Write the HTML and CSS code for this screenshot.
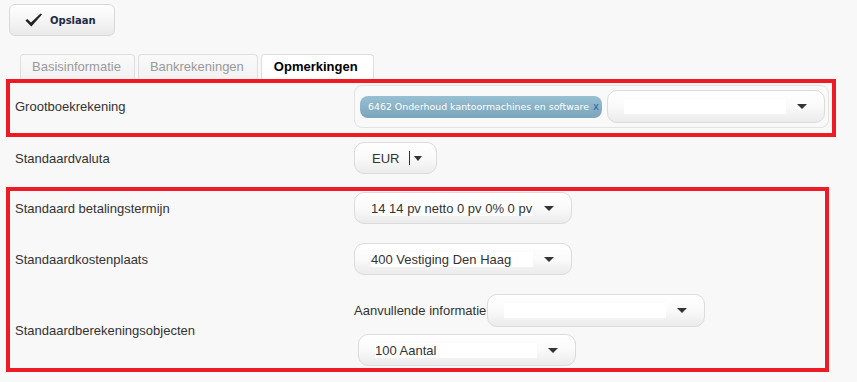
FILE: index.html
```html
<!DOCTYPE html>
<html lang="nl">
<head>
<meta charset="utf-8">
<title>Opmerkingen</title>
<link rel="stylesheet" href="styles.css">
</head>
<body>
<div class="page">
  <div class="toolbar">
    <button class="btn-save" type="button">
      <svg class="check" width="17" height="14" viewBox="0 0 17 14"><path d="M0.4 7.6 L2.3 5.9 L6 9.4 L15.6 0.4 L17 1.6 L6.4 13.6 Z" fill="#222"/></svg>
      <span>Opslaan</span>
    </button>
  </div>

  <div class="tabs">
    <div class="tab">Basisinformatie</div>
    <div class="tab">Bankrekeningen</div>
    <div class="tab active">Opmerkingen</div>
  </div>

  <div class="section hl hl-wide sec-gb">
    <div class="row">
      <div class="label">Grootboekrekening</div>
      <div class="multi">
        <span class="chip">6462 Onderhoud kantoormachines en software<span class="chip-x">x</span></span>
        <div class="select select-gb"><span class="value"></span><span class="arrow"></span></div>
      </div>
    </div>
  </div>

  <div class="section plain sec-val">
    <div class="row">
      <div class="label">Standaardvaluta</div>
      <div class="select select-eur"><span class="value-eur">EUR</span><span class="caret"></span><span class="arrow arrow-sm"></span></div>
    </div>
  </div>

  <div class="section hl hl-narrow sec-std">
    <div class="row">
      <div class="label">Standaard betalingstermijn</div>
      <div class="select"><span class="value">14 14 pv netto 0 pv 0% 0 pv</span><span class="arrow"></span></div>
    </div>
    <div class="row">
      <div class="label">Standaardkostenplaats</div>
      <div class="select"><span class="value">400 Vestiging Den Haag</span><span class="arrow"></span></div>
    </div>
    <div class="row">
      <div class="label">Standaardberekeningsobjecten</div>
      <div class="stack">
        <div class="inline">
          <span class="inline-label">Aanvullende informatie</span>
          <div class="select select-tall"><span class="value"></span><span class="arrow"></span></div>
        </div>
        <div class="select select-offset"><span class="value">100 Aantal</span><span class="arrow"></span></div>
      </div>
    </div>
  </div>
</div>
</body>
</html>
```

FILE: styles.css
```css
* { box-sizing: border-box; }

html, body {
  margin: 0;
  padding: 0;
  background: #f8f8f8;
}

body {
  font-family: "Liberation Sans", Arial, sans-serif;
  font-size: 13px;
  color: #333;
}

.page {
  padding: 4px 0 0 6px;
}

/* toolbar */
.toolbar {
  padding-left: 3px;
  display: flex;
}

.btn-save {
  display: flex;
  align-items: center;
  gap: 8px;
  width: 106px;
  height: 32px;
  margin: 0;
  padding: 0 0 0 15px;
  border: 1px solid #d9d9d9;
  border-radius: 6px;
  background: linear-gradient(#ffffff, #f4f4f4 55%, #e9e9e9);
  font-family: "DejaVu Sans", Verdana, sans-serif;
  font-weight: bold;
  font-size: 10px;
  color: #1d2b48;
  cursor: pointer;
}

.check { display: block; flex-shrink: 0; }

/* tabs */
.tabs {
  display: flex;
  gap: 3px;
  margin-top: 18px;
  padding-left: 14px;
}

.tab {
  height: 25px;
  line-height: 24px;
  padding: 0 13px 0 11px;
  border: 1px solid #dedede;
  border-bottom: none;
  border-radius: 4px 4px 0 0;
  background: linear-gradient(#fafafa, #f2f2f2);
  color: #9a9a9a;
  font-size: 13px;
}

.tab.active {
  padding: 0 15px 0 12px;
  background: #fff;
  color: #000;
  font-weight: bold;
}

/* sections */
.section {
  border: 4px solid transparent;
  display: flex;
  flex-direction: column;
}

.section.hl { border-color: #ed1c24; }
.hl-wide { width: 830px; }
.hl-narrow { width: 823px; }

.sec-gb { padding: 2px 0 5px 5px; }
.sec-val { padding: 1px 0 9px 5px; }
.sec-std { padding: 1px 0 2px 5px; gap: 19px; }

.row {
  display: flex;
  align-items: center;
}

.label {
  width: 339px;
  flex-shrink: 0;
  font-size: 13px;
  color: #333;
}

/* multi select (grootboek) */
.multi {
  display: flex;
  align-items: center;
  gap: 5px;
  width: 475px;
  height: 43px;
  padding: 0 3px 0 5px;
  border: 1px solid #e3e3e3;
  border-radius: 8px;
  background: #f9f9f9;
}

.chip {
  display: inline-flex;
  align-items: center;
  width: 242px;
  height: 22px;
  padding: 0 0 0 8px;
  border-radius: 8px;
  background: linear-gradient(#98c0d3, #7ba4ba);
  color: #fff;
  font-family: "DejaVu Sans", Verdana, sans-serif;
  font-size: 9.4px;
  white-space: nowrap;
  flex-shrink: 0;
}

.chip-x {
  margin-left: 4px;
  color: #2a64b4;
  font-size: 10px;
}

/* select */
.select {
  display: flex;
  align-items: center;
  width: 218px;
  height: 32px;
  padding-left: 16px;
  border: 1px solid #dcdcdc;
  border-radius: 10px;
  background: linear-gradient(#ffffff, #fafafa 50%, #ebebeb);
  flex-shrink: 0;
}

.select-gb { height: 33px; }
.select-tall { height: 33px; }
.select-offset { margin-left: 4px; }

.value {
  display: block;
  width: 162px;
  height: 15px;
  line-height: 15px;
  background: #fff;
  font-size: 13px;
  color: #333;
  white-space: nowrap;
}

.arrow {
  width: 0;
  height: 0;
  margin-left: 11px;
  border-left: 5px solid transparent;
  border-right: 5px solid transparent;
  border-top: 5px solid #333;
}

.select-eur {
  width: 83px;
  padding-left: 17px;
}

.value-eur {
  width: 37px;
  font-size: 13px;
  color: #333;
}

.caret {
  width: 1px;
  height: 14px;
  background: #333;
}

.arrow-sm {
  margin-left: 4px;
  border-left-width: 4px;
  border-right-width: 4px;
}

/* last row */
.stack {
  display: flex;
  flex-direction: column;
  gap: 7px;
}

.inline {
  display: flex;
  align-items: center;
  gap: 1px;
}

.inline-label {
  font-size: 13px;
  color: #333;
}
```
